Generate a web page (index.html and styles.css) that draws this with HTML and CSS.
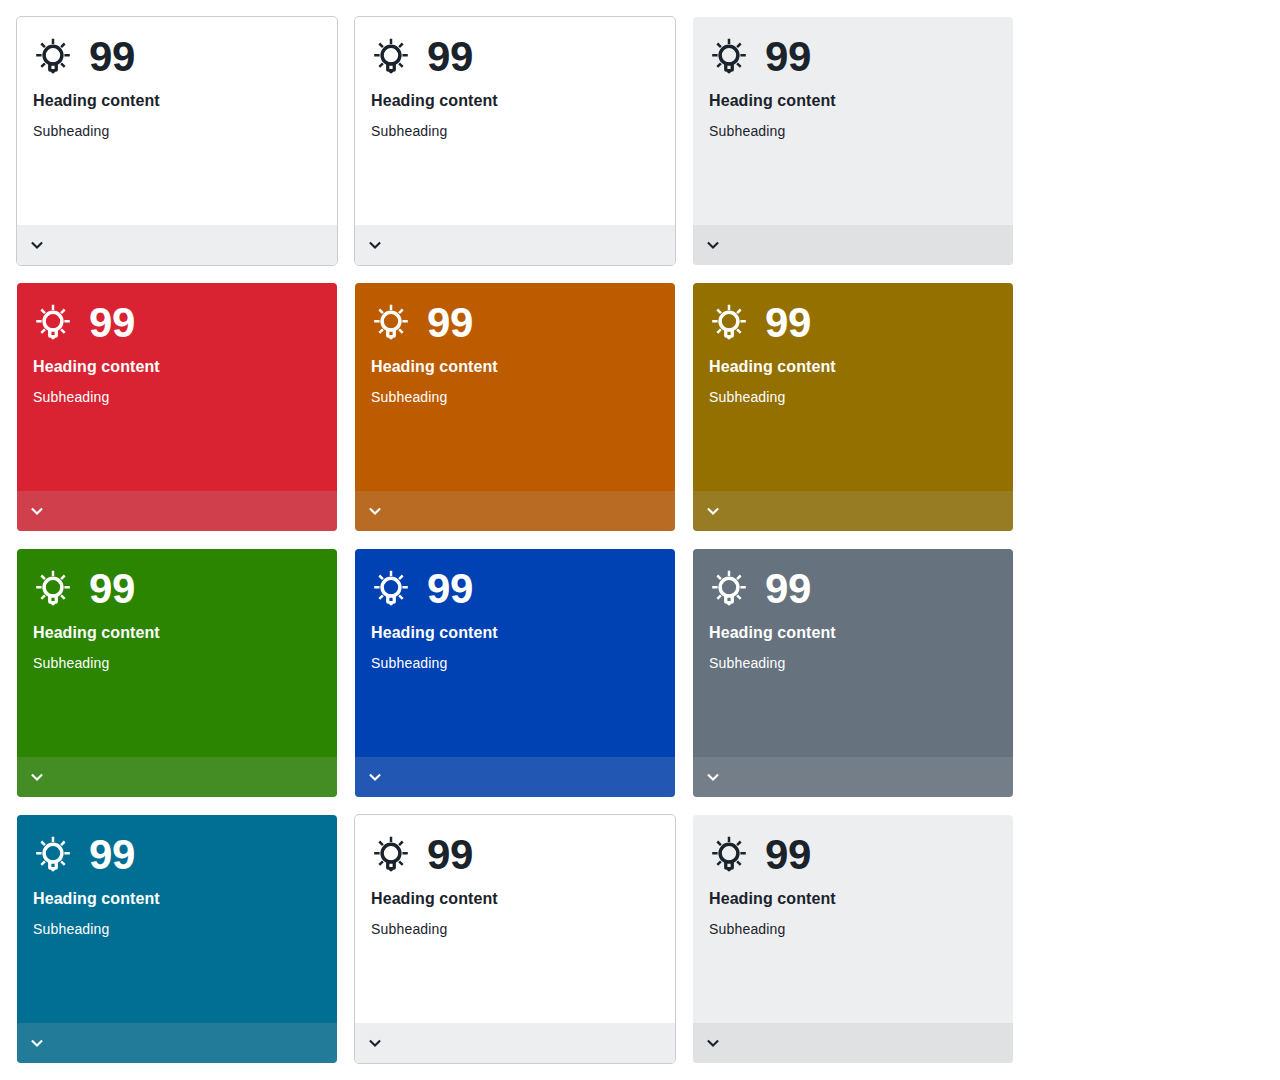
FILE: index.html
```html
<!DOCTYPE html>
<html lang="en">
<head>
<meta charset="utf-8">
<title>Cards</title>
<link rel="stylesheet" href="styles.css">
</head>
<body>
<svg class="sprite" aria-hidden="true">
  <symbol id="bulb" viewBox="0 0 40 40">
    <g fill="none" stroke="currentColor">
      <circle cx="20" cy="19.2" r="8.9" stroke-width="3.5"/>
      <path stroke-width="2.5" d="M20 2.7v5.2M3.2 19.2h5.4M31.4 19.2h5.4M8.3 7.5l3.6 3.6M31.7 7.5l-3.6 3.6M8.3 30.9l3.6-3.6M31.7 30.9l-3.6-3.6"/>
    </g>
    <path fill="currentColor" fill-rule="evenodd" d="M15.1 26.5h9.8v7.3q0 2-2 2h-.9q-.5 1.8-2 1.8t-2-1.8h-.9q-2 0-2-2zM18.4 29v3.9h3.2v-3.9z"/>
  </symbol>
  <symbol id="chevron" viewBox="0 0 16 16">
    <path fill="none" stroke="currentColor" stroke-width="2.1" d="M2.9 5.4l5.1 5.1 5.1-5.1"/>
  </symbol>
</svg>
<main class="cards"></main>
<script src="cards.js"></script>
</body>
</html>
```
FILE: styles.css
```css
body { margin: 0; background: #fff; font-family: "Liberation Sans", Arial, sans-serif; }
.sprite { display: none; }
.cards {
  display: grid;
  grid-template-columns: repeat(3, 322px);
  grid-auto-rows: 250px;
  gap: 16px;
  padding: 16px;
}
.card {
  box-sizing: border-box;
  display: flex;
  flex-direction: column;
  border: 1px solid transparent;
  border-radius: 5px;
  background-clip: padding-box;
  color: #fff;
  overflow: hidden;
}
.body { flex: 1; padding: 16px; }
.top { display: flex; align-items: center; gap: 16px; height: 48px; }
.bulb { width: 40px; height: 40px; margin-top: -2px; }
.number { font-size: 42px; line-height: 48px; font-weight: 700; letter-spacing: -0.4px; }
.heading { margin: 8px 0 0; font-size: 16px; line-height: 24px; font-weight: 700; letter-spacing: 0.09px; }
.subheading { margin: 8px 0 0; font-size: 14px; line-height: 20px; letter-spacing: 0.18px; }
.footer { display: flex; align-items: center; height: 40px; padding-left: 12px; background: rgba(169, 173, 178, 0.2); }
.chevron { width: 16px; height: 16px; }
.plain { background-color: #fff; border-color: #cbccd2; color: #1a232b; }
.plain .footer { background-color: #edeef0; }
.light { background-color: #edeef0; color: #1a232b; }
.light .footer { background-color: #e0e1e3; }
.red { background-color: #d92332; }
.orange { background-color: #bd5b00; }
.yellow { background-color: #947000; }
.green { background-color: #2b8500; }
.blue { background-color: #0041b3; }
.gray { background-color: #66727e; }
.teal { background-color: #006f93; }
```
FILE: cards.js
```js
const tones = ["plain", "plain", "light", "red", "orange", "yellow", "green", "blue", "gray", "teal", "plain", "light"];
document.querySelector(".cards").innerHTML = tones.map((tone) => `
  <article class="card ${tone}">
    <div class="body">
      <div class="top">
        <svg class="bulb"><use href="#bulb"/></svg>
        <span class="number">99</span>
      </div>
      <h2 class="heading">Heading content</h2>
      <p class="subheading">Subheading</p>
    </div>
    <div class="footer"><svg class="chevron"><use href="#chevron"/></svg></div>
  </article>`).join("");
```
